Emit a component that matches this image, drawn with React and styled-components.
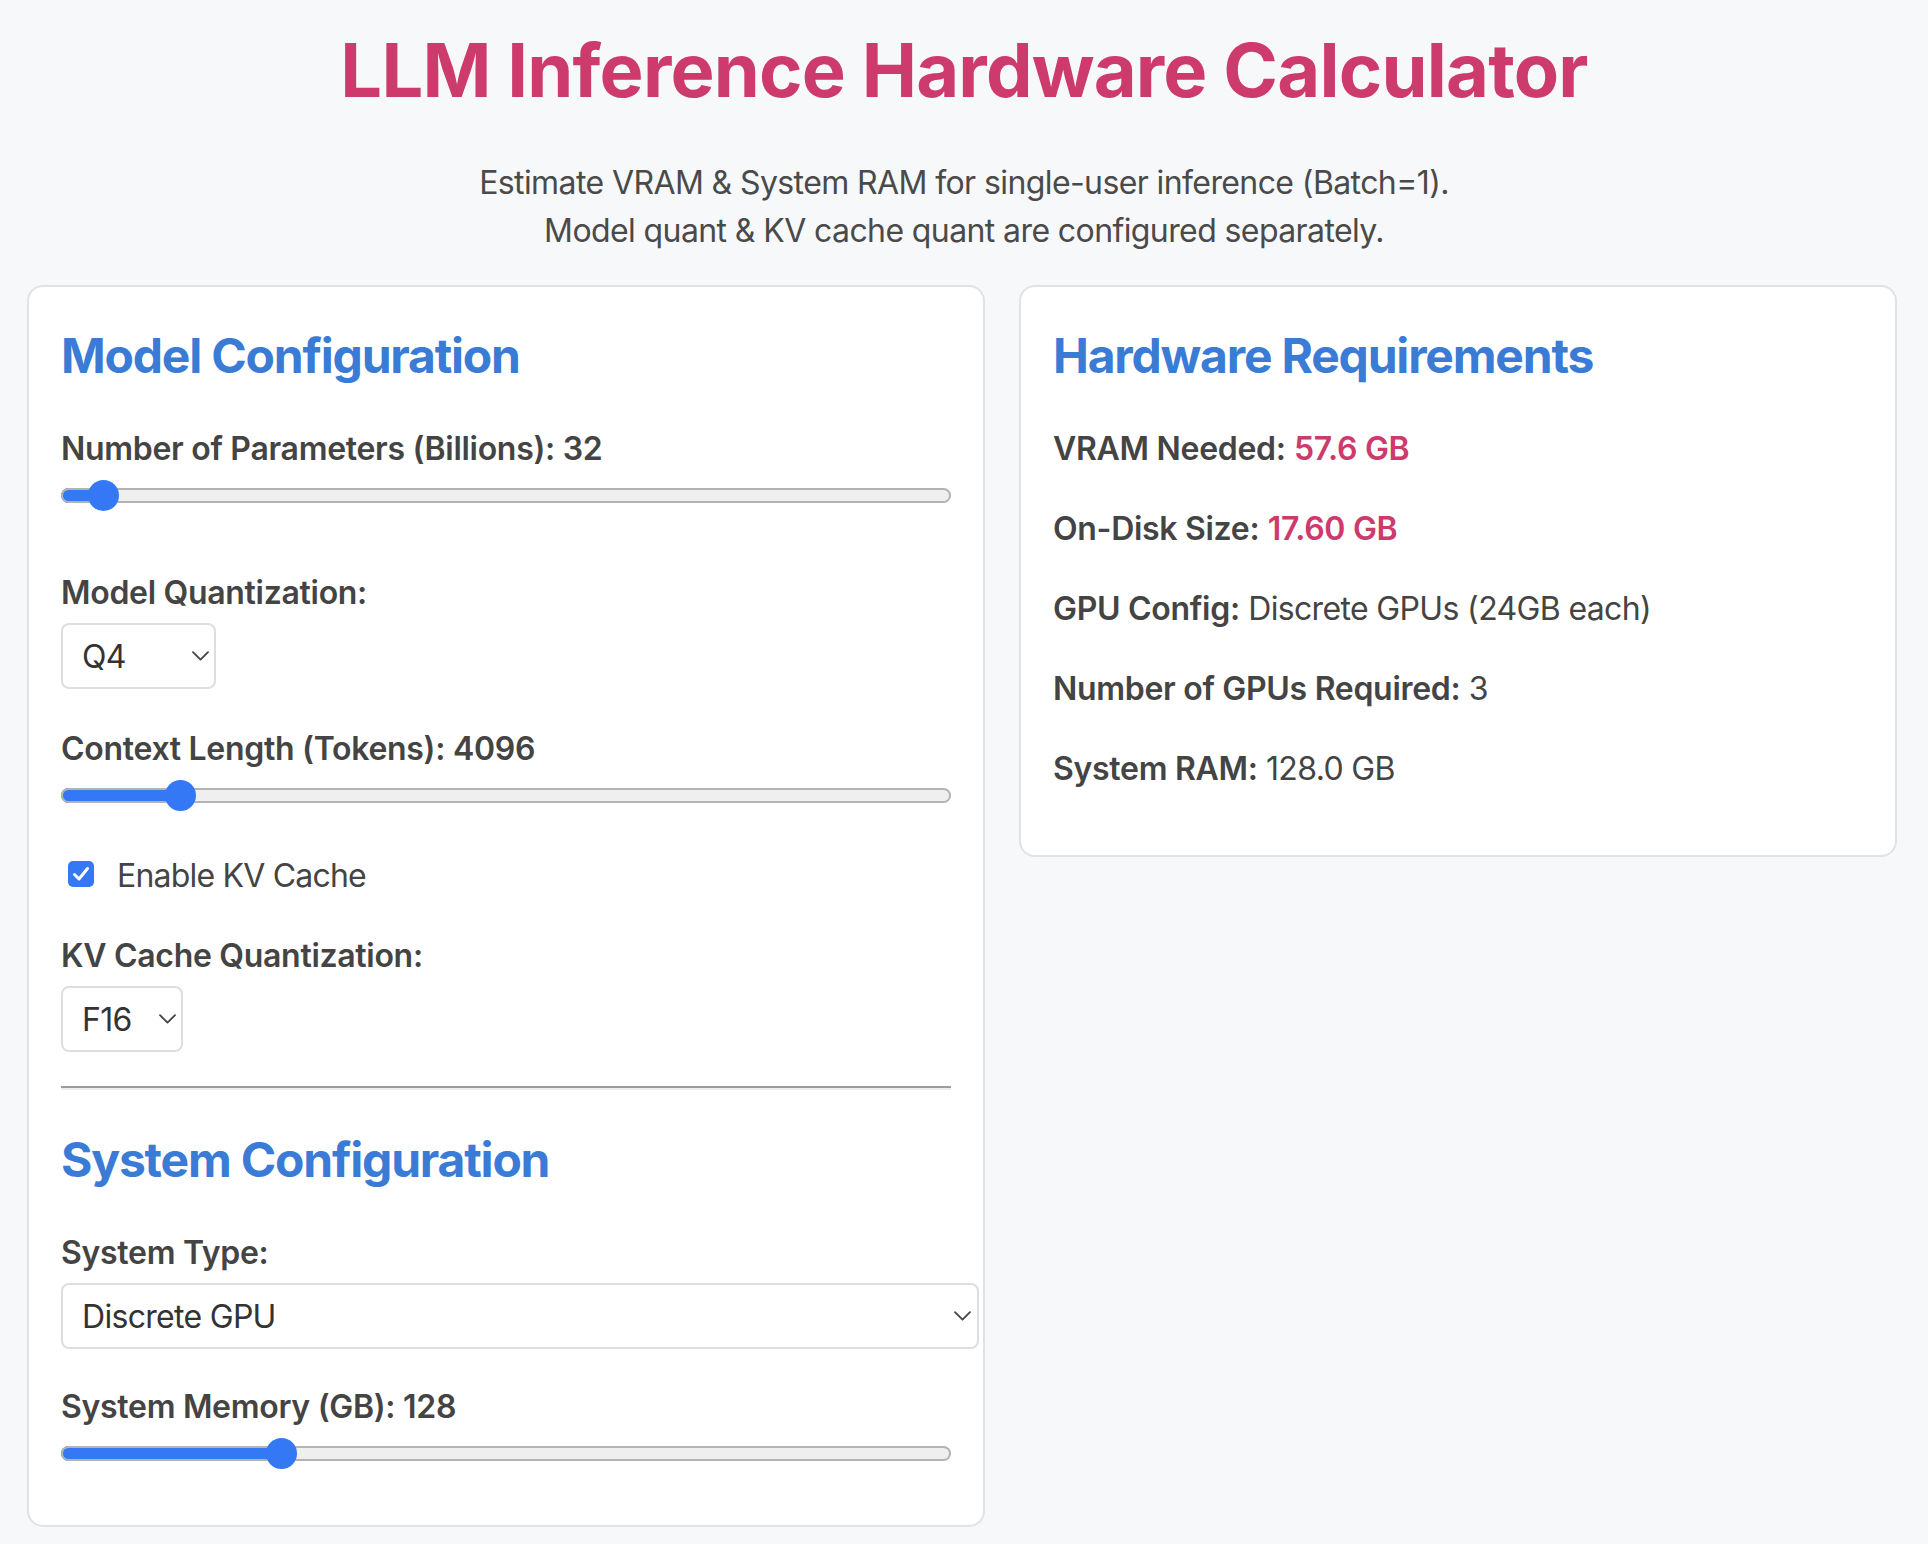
import React, { useState } from 'react';
import styled, { createGlobalStyle } from 'styled-components';

const GlobalStyle = createGlobalStyle`
  html, body { margin: 0; padding: 0; background: #f7f8fa; }
  body { font-family: Inter, "Noto Sans", "Liberation Sans", sans-serif; color: #444; }
  *, *::before, *::after { box-sizing: border-box; }
`;

const Page = styled.div`
  min-height: 1544px;
  padding-top: 24px;
`;

const Header = styled.header`
  text-align: center;
`;

const Title = styled.h1`
  margin: 0 0 43px;
  font-size: 74px;
  line-height: 92px;
  font-weight: 700;
  letter-spacing: -0.8px;
  color: #cc3b6b;
`;

const Subtitle = styled.p`
  margin: 0 0 30px;
  font-size: 32px;
  line-height: 48px;
  letter-spacing: -0.6px;
  color: #4a4a4a;
`;

const Columns = styled.main`
  display: grid;
  grid-template-columns: 958px 878px;
  column-gap: 34px;
  align-items: start;
  margin: 0 31px 0 27px;
`;

const Card = styled.section`
  background: #fff;
  border: 2px solid #e2e2e2;
  border-radius: 16px;
  padding: 32px;
`;

const SectionTitle = styled.h2`
  margin: 0 0 32px;
  padding-top: 1px;
  height: 72px;
  font-size: 48px;
  line-height: 72px;
  font-weight: 700;
  letter-spacing: -1.2px;
  color: #3a7bd5;
`;

const Field = styled.div`
  margin-bottom: ${(p) => p.$gap ?? 32}px;
`;

const Label = styled.label`
  display: block;
  height: 50px;
  padding-top: 2px;
  margin-bottom: 6px;
  font-size: 32px;
  line-height: 48px;
  font-weight: 600;
  letter-spacing: -0.3px;
  color: #444;
`;

const Range = styled.input.attrs({ type: 'range' })`
  -webkit-appearance: none;
  appearance: none;
  display: block;
  width: 100%;
  height: 32px;
  margin: 0;
  background: transparent;
  cursor: pointer;

  &::-webkit-slider-runnable-track {
    height: 15px;
    border: none;
    border-radius: 8px;
    box-shadow: inset 0 0 0 2px #b3b3b3;
    background: linear-gradient(
      to right,
      #3478f6 0,
      #3478f6 var(--fill),
      #efefef var(--fill),
      #efefef 100%
    );
  }

  &::-webkit-slider-thumb {
    -webkit-appearance: none;
    appearance: none;
    width: 31px;
    height: 31px;
    margin-top: -8px;
    border: none;
    border-radius: 50%;
    background: #3478f6;
  }
`;

const SelectWrap = styled.div`
  position: relative;
  width: ${(p) => p.$width};
`;

const Select = styled.select`
  -webkit-appearance: none;
  appearance: none;
  display: block;
  width: 100%;
  height: 66px;
  margin: 0;
  padding: 0 40px 0 19px;
  border: 2px solid #dedede;
  border-radius: 8px;
  background: #fff;
  font-family: Inter, "Noto Sans", "Liberation Sans", sans-serif;
  font-size: 32px;
  letter-spacing: -0.7px;
  color: #333;
  outline: none;
`;

const Chevron = styled.svg`
  position: absolute;
  right: ${(p) => p.$right}px;
  top: 50%;
  width: 17px;
  height: 10px;
  transform: translateY(-50%);
  pointer-events: none;
`;

const CheckRow = styled.label`
  display: flex;
  align-items: center;
  gap: 23px;
  height: 48px;
  padding-left: 7px;
  margin-bottom: 32px;
  font-size: 32px;
  line-height: 48px;
  letter-spacing: -0.8px;
  color: #444;
  cursor: pointer;
`;

const CheckText = styled.span`
  padding-top: 3px;
`;

const HiddenInput = styled.input`
  display: none;
`;

const CheckBox = styled.span`
  display: grid;
  place-items: center;
  width: 26px;
  height: 26px;
  border-radius: 5px;
  background: ${(p) => (p.$checked ? '#3478f6' : '#fff')};
  border: ${(p) => (p.$checked ? 'none' : '2px solid #8a8a8a')};
`;

const Divider = styled.hr`
  margin: 34px 0 33px;
  border: 0;
  border-top: 2px solid #9c9c9c;
  border-bottom: 2px solid #eeeeee;
  height: 0;
`;

const ResultRow = styled.p`
  height: 48px;
  margin: 0 0 32px;
  padding-top: 2px;
  font-size: 32px;
  line-height: 48px;
  letter-spacing: -0.6px;
  color: #444;
`;

const Key = styled.strong`
  font-weight: 600;
  letter-spacing: -0.3px;
  color: #444;
`;

const Value = styled.span`
  color: ${(p) => (p.$highlight ? '#cc3b6b' : '#444')};
  font-weight: ${(p) => (p.$highlight ? 600 : 400)};
  letter-spacing: ${(p) => (p.$highlight ? '-0.3px' : '-0.65px')};
`;

function Slider({ min, max, value, onChange }) {
  const frac = (value - min) / (max - min);
  return (
    <Range
      min={min}
      max={max}
      value={value}
      onChange={(e) => onChange(Number(e.target.value))}
      style={{ '--fill': `calc(15.5px + ${frac} * (100% - 31px))` }}
    />
  );
}

function ChevronIcon({ right }) {
  return (
    <Chevron $right={right} viewBox="0 0 17 10" fill="none">
      <path d="M1 1.2 L8.5 8.6 L16 1.2" stroke="#444" strokeWidth="1.8" strokeLinecap="round" strokeLinejoin="round" />
    </Chevron>
  );
}

export default function App() {
  const [params, setParams] = useState(32);
  const [ctx, setCtx] = useState(4096);
  const [mem, setMem] = useState(128);
  const [kv, setKv] = useState(true);
  const [quant, setQuant] = useState('Q4');
  const [kvQuant, setKvQuant] = useState('F16');
  const [sysType, setSysType] = useState('discrete');

  return (
    <Page>
      <GlobalStyle />
      <Header>
        <Title>LLM Inference Hardware Calculator</Title>
        <Subtitle>
          Estimate VRAM &amp; System RAM for single-user inference (Batch=1).
          <br />
          Model quant &amp; KV cache quant are configured separately.
        </Subtitle>
      </Header>
      <Columns>
        <Card>
          <SectionTitle>Model Configuration</SectionTitle>
          <Field $gap={56}>
            <Label>Number of Parameters (Billions): {params}</Label>
            <Slider min={1} max={1000} value={params} onChange={setParams} />
          </Field>
          <Field $gap={34}>
            <Label>Model Quantization:</Label>
            <SelectWrap $width="155px">
              <Select value={quant} onChange={(e) => setQuant(e.target.value)}>
                <option value="F32">F32</option>
                <option value="F16">F16</option>
                <option value="Q8">Q8</option>
                <option value="Q6">Q6</option>
                <option value="Q5">Q5</option>
                <option value="Q4">Q4</option>
                <option value="Q3">Q3</option>
                <option value="Q2">Q2</option>
              </Select>
              <ChevronIcon right={7} />
            </SelectWrap>
          </Field>
          <Field $gap={39}>
            <Label>Context Length (Tokens): {ctx}</Label>
            <Slider min={128} max={32768} value={ctx} onChange={setCtx} />
          </Field>
          <CheckRow>
            <HiddenInput type="checkbox" checked={kv} onChange={(e) => setKv(e.target.checked)} />
            <CheckBox $checked={kv}>
              {kv && (
                <svg width="18" height="16" viewBox="0 0 18 16" fill="none">
                  <path d="M2.5 8.5 L7 13 L15.5 2.5" stroke="#fff" strokeWidth="3" strokeLinecap="round" strokeLinejoin="round" />
                </svg>
              )}
            </CheckBox>
            <CheckText>Enable KV Cache</CheckText>
          </CheckRow>
          <Field $gap={0}>
            <Label>KV Cache Quantization:</Label>
            <SelectWrap $width="122px">
              <Select value={kvQuant} onChange={(e) => setKvQuant(e.target.value)}>
                <option value="F32">F32</option>
                <option value="F16">F16</option>
                <option value="Q8">Q8</option>
                <option value="Q4">Q4</option>
              </Select>
              <ChevronIcon right={7} />
            </SelectWrap>
          </Field>
          <Divider />
          <SectionTitle>System Configuration</SectionTitle>
          <Field>
            <Label>System Type:</Label>
            <SelectWrap $width="calc(100% + 28px)">
              <Select value={sysType} onChange={(e) => setSysType(e.target.value)}>
                <option value="discrete">Discrete GPU</option>
                <option value="unified">Unified Memory</option>
                <option value="cpu">CPU Only</option>
              </Select>
              <ChevronIcon right={8} />
            </SelectWrap>
          </Field>
          <Field $gap={24}>
            <Label>System Memory (GB): {mem}</Label>
            <Slider min={8} max={512} value={mem} onChange={setMem} />
          </Field>
        </Card>
        <Card>
          <SectionTitle>Hardware Requirements</SectionTitle>
          <ResultRow>
            <Key>VRAM Needed:</Key> <Value $highlight>57.6 GB</Value>
          </ResultRow>
          <ResultRow>
            <Key>On-Disk Size:</Key> <Value $highlight>17.60 GB</Value>
          </ResultRow>
          <ResultRow>
            <Key>GPU Config:</Key> <Value>Discrete GPUs (24GB each)</Value>
          </ResultRow>
          <ResultRow>
            <Key>Number of GPUs Required:</Key> <Value>3</Value>
          </ResultRow>
          <ResultRow>
            <Key>System RAM:</Key> <Value>128.0 GB</Value>
          </ResultRow>
        </Card>
      </Columns>
    </Page>
  );
}
